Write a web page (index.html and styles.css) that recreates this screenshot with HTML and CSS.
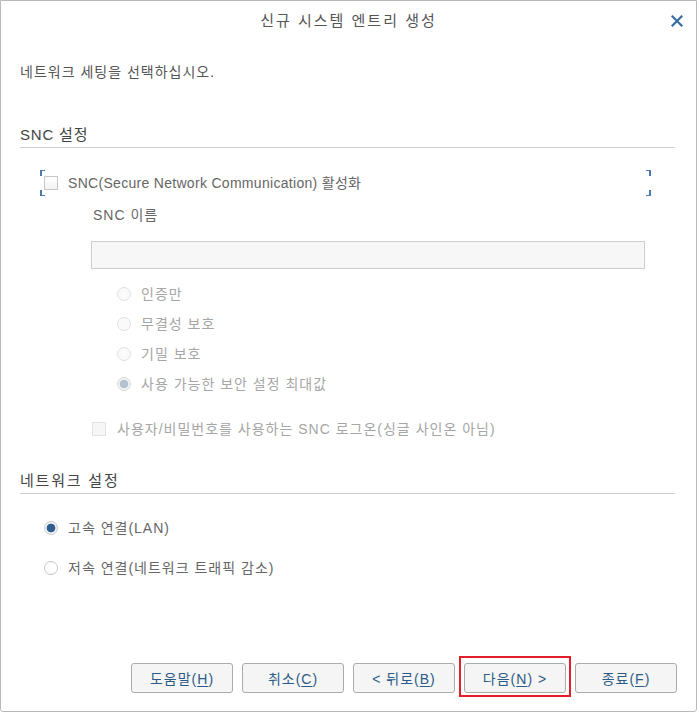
FILE: index.html
```html
<!DOCTYPE html>
<html lang="ko">
<head>
<meta charset="utf-8">
<title>신규 시스템 엔트리 생성</title>
<link rel="stylesheet" href="styles.css">
</head>
<body>
<div class="dialog">
  <div class="header">
    <div class="title">신규 시스템 엔트리 생성</div>
    <button class="close" aria-label="닫기">
      <svg width="12" height="12" viewBox="0 0 12 12"><path d="M1.5 1.5 L10.5 10.5 M10.5 1.5 L1.5 10.5" stroke="#3a6d9e" stroke-width="2.2" stroke-linecap="square"/></svg>
    </button>
  </div>
  <div class="content">
    <div class="intro">네트워크 세팅을 선택하십시오.</div>

    <div class="section-head snc-head">SNC 설정</div>
    <div class="focus-row">
      <span class="cb"></span>
      <span class="label latin">SNC(Secure Network Communication) 활성화</span>
    </div>
    <div class="snc-name">SNC 이름</div>
    <div class="input"></div>
    <div class="radio-list">
      <div class="row"><span class="rb dis"></span><span class="label dis-text">인증만</span></div>
      <div class="row"><span class="rb dis"></span><span class="label dis-text">무결성 보호</span></div>
      <div class="row"><span class="rb dis"></span><span class="label dis-text">기밀 보호</span></div>
      <div class="row"><span class="rb dis checked"></span><span class="label dis-text">사용 가능한 보안 설정 최대값</span></div>
    </div>
    <div class="row sso-row"><span class="cb dis"></span><span class="label dis-text">사용자/비밀번호를 사용하는 SNC 로그온(싱글 사인온 아님)</span></div>

    <div class="section-head net-head">네트워크 설정</div>
    <div class="net-list">
      <div class="row"><span class="rb on checked"></span><span class="label">고속 연결(LAN)</span></div>
      <div class="row"><span class="rb on"></span><span class="label">저속 연결(네트워크 트래픽 감소)</span></div>
    </div>
  </div>
  <div class="footer">
    <button class="btn">도움말(<u>H</u>)</button>
    <button class="btn">취소(<u>C</u>)</button>
    <button class="btn">&lt; 뒤로(<u>B</u>)</button>
    <button class="btn highlight">다음(<u>N</u>) &gt;</button>
    <button class="btn">종료(<u>F</u>)</button>
  </div>
</div>
</body>
</html>
```
FILE: styles.css
```css
html, body {
  margin: 0;
  padding: 0;
  background: #ffffff;
}
body {
  font-family: "Liberation Sans", "Noto Sans CJK KR", sans-serif;
  font-size: 14px;
  color: #666666;
  letter-spacing: 1px;
}
.dialog {
  width: 697px;
  height: 712px;
  box-sizing: border-box;
  border: 1px solid #b6babf;
  border-radius: 0 0 3px 3px;
  display: flex;
  flex-direction: column;
  background: #ffffff;
}
.header {
  position: relative;
  height: 40px;
  display: flex;
  align-items: center;
  justify-content: center;
  flex: none;
}
.title {
  font-size: 15px;
  color: #555555;
  line-height: 20px;
  letter-spacing: 2px;
}
.close {
  position: absolute;
  right: 13px;
  top: 14px;
  width: 12px;
  height: 12px;
  padding: 0;
  border: 0;
  background: none;
  display: flex;
}
.content {
  flex: 1;
  padding: 0 21px 0 19px;
  display: flex;
  flex-direction: column;
}
.intro {
  margin-top: 21px;
  line-height: 20px;
  color: #555555;
}
.section-head {
  line-height: 20px;
  padding-bottom: 2px;
  border-bottom: 1px solid #cfcfcf;
  color: #444444;
  font-size: 15px;
}
.snc-head { margin-top: 43px; letter-spacing: 0.8px; }
.net-head { margin-top: 27px; letter-spacing: 1.8px; }

.focus-row {
  margin: 22px 24px 0 20px;
  height: 26px;
  padding-left: 4px;
  display: flex;
  align-items: center;
  background:
    linear-gradient(#4a7aab, #4a7aab) left top / 5px 1px no-repeat,
    linear-gradient(#4a7aab, #4a7aab) left top / 2px 6px no-repeat,
    linear-gradient(#4a7aab, #4a7aab) left bottom / 5px 1px no-repeat,
    linear-gradient(#4a7aab, #4a7aab) left bottom / 2px 6px no-repeat,
    linear-gradient(#4a7aab, #4a7aab) right top / 5px 1px no-repeat,
    linear-gradient(#4a7aab, #4a7aab) right top / 2px 6px no-repeat,
    linear-gradient(#4a7aab, #4a7aab) right bottom / 5px 1px no-repeat,
    linear-gradient(#4a7aab, #4a7aab) right bottom / 2px 6px no-repeat;
}
.focus-row .label { margin-left: 10px; }
.latin { letter-spacing: 0.3px; }

.cb {
  width: 14px;
  height: 14px;
  box-sizing: border-box;
  border: 1px solid #c4c8cc;
  background: linear-gradient(#ffffff, #f3f3f3);
  flex: none;
}
.cb.dis {
  border-color: #e2e2e2;
  background: #f6f6f6;
}
.snc-name {
  margin: 9px 0 0 73px;
  line-height: 20px;
}
.input {
  margin: 16px 30px 0 71px;
  height: 28px;
  box-sizing: border-box;
  border: 1px solid #cdcdcd;
  background: #f7f7f7;
}
.row {
  display: flex;
  align-items: center;
  height: 30px;
}
.label { line-height: 20px; white-space: nowrap; }
.dis-text { color: #a6a6a6; }
.radio-list {
  margin: 10px 0 0 97px;
  display: flex;
  flex-direction: column;
}
.radio-list .label { margin-left: 10px; }
.rb {
  width: 14px;
  height: 14px;
  box-sizing: border-box;
  border-radius: 50%;
  flex: none;
  position: relative;
}
.rb.dis {
  border: 1px solid #e2e2e2;
  background: #fafafa;
}
.rb.dis.checked {
  border-color: #d8d8d8;
  background: radial-gradient(circle, #b3c2d1 0, #b3c2d1 4px, #f2f2f2 4.6px);
}
.rb.on {
  border: 1px solid #c3c6ca;
  background: #ffffff;
}
.rb.on.checked {
  border-color: #c8cbd0;
  background: radial-gradient(circle, #2f5f8f 0, #2f5f8f 4px, #eef1f4 4.7px);
}
.sso-row {
  margin: 15px 0 0 72px;
}
.sso-row .label { margin-left: 11px; }
.net-list {
  margin: 19px 0 0 24px;
  display: flex;
  flex-direction: column;
  gap: 10px;
}
.net-list .label { margin-left: 10px; }

.footer {
  flex: none;
  display: flex;
  justify-content: flex-end;
  gap: 9px;
  padding: 0 19px 18px 0;
}
.btn {
  position: relative;
  width: 102px;
  height: 30px;
  box-sizing: border-box;
  border: 1px solid #ababab;
  border-radius: 3px;
  background: #f5f5f5;
  color: #2d5b87;
  font-family: "Liberation Sans", "Noto Sans CJK KR", sans-serif;
  font-size: 14px;
  letter-spacing: 1px;
  padding: 0;
}
.btn u { text-underline-offset: 2px; }
.highlight::after {
  content: "";
  position: absolute;
  left: -6px;
  right: -6px;
  top: -8px;
  bottom: -5px;
  border: 2px solid #e21f27;
}
```
